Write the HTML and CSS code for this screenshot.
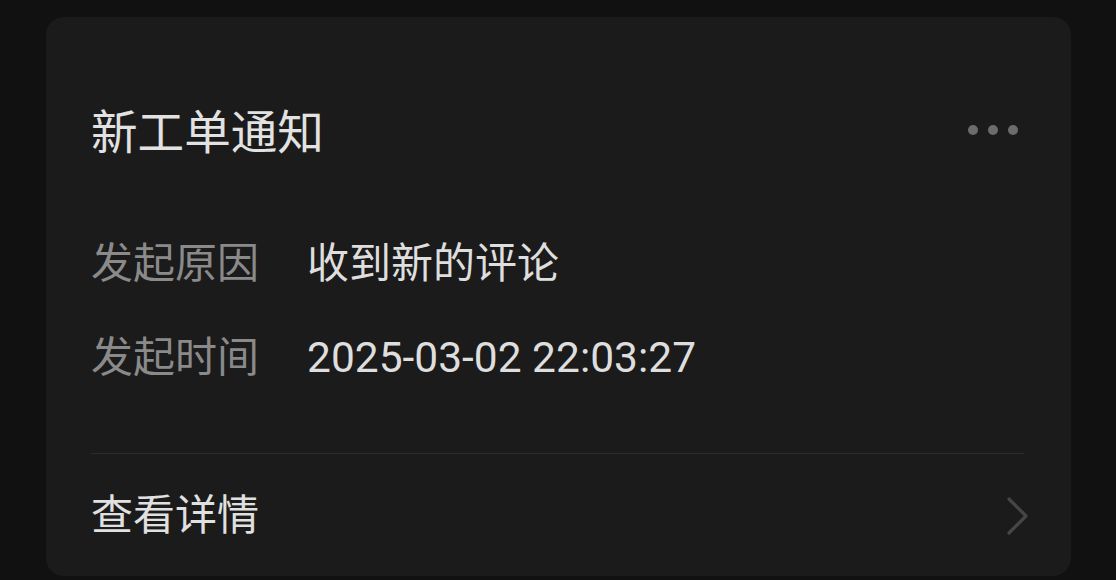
FILE: index.html
```html
<!DOCTYPE html>
<html lang="zh-CN">
<head>
<meta charset="utf-8">
<title>新工单通知</title>
<link rel="stylesheet" href="styles.css">
</head>
<body>
<div class="card">
  <div class="header">
    <div class="title">新工单通知</div>
    <div class="more"><span class="dot"></span><span class="dot"></span><span class="dot"></span></div>
  </div>
  <div class="info">
    <div class="row"><span class="label">发起原因</span><span class="value">收到新的评论</span></div>
    <div class="row"><span class="label">发起时间</span><span class="value date">2025-03-02 22:03:27</span></div>
  </div>
  <div class="divider"></div>
  <div class="footer">
    <span class="link">查看详情</span>
    <svg class="chevron" width="24" height="40" viewBox="0 0 24 40"><polyline points="3,3 20,20 3,37" fill="none" stroke="#464646" stroke-width="3.2" stroke-linecap="round" stroke-linejoin="round"/></svg>
  </div>
</div>
</body>
</html>
```
FILE: styles.css
```css
html, body {
  margin: 0;
  padding: 0;
  background: #111111;
}
body {
  font-family: Roboto, "Noto Sans CJK SC", sans-serif;
  width: 1116px;
  height: 580px;
  overflow: hidden;
  padding-top: 17px;
  padding-left: 46px;
  box-sizing: border-box;
}
.card {
  width: 1025px;
  height: 559px;
  box-sizing: border-box;
  background: #1b1b1b;
  border-radius: 18px;
  padding: 86px 47px 0 45px;
  display: flex;
  flex-direction: column;
}
.header {
  display: flex;
  justify-content: space-between;
  align-items: center;
  height: 60px;
}
.title {
  font-size: 46.6px;
  line-height: 60px;
  color: #e2e2e2;
}
.more {
  display: flex;
  gap: 10px;
  padding-right: 6px;
  margin-top: -6px;
}
.dot {
  width: 10px;
  height: 10px;
  border-radius: 50%;
  background: #6c6c6c;
}
.info {
  margin-top: 73px;
  display: flex;
  flex-direction: column;
  gap: 38px;
}
.row {
  display: flex;
  height: 56px;
  align-items: center;
  font-size: 42px;
  line-height: 56px;
}
.label {
  width: 216px;
  color: #8a8a8a;
}
.value {
  color: #dedede;
}
.date {
  font-size: 42.5px;
}
.divider {
  margin-top: 67px;
  height: 1px;
  background: #2c2c2c;
}
.footer {
  margin-top: 34px;
  height: 56px;
  display: flex;
  justify-content: space-between;
  align-items: center;
}
.link {
  font-size: 42px;
  line-height: 56px;
  color: #e0e0e0;
}
.chevron {
  margin-right: -6px;
}
```
